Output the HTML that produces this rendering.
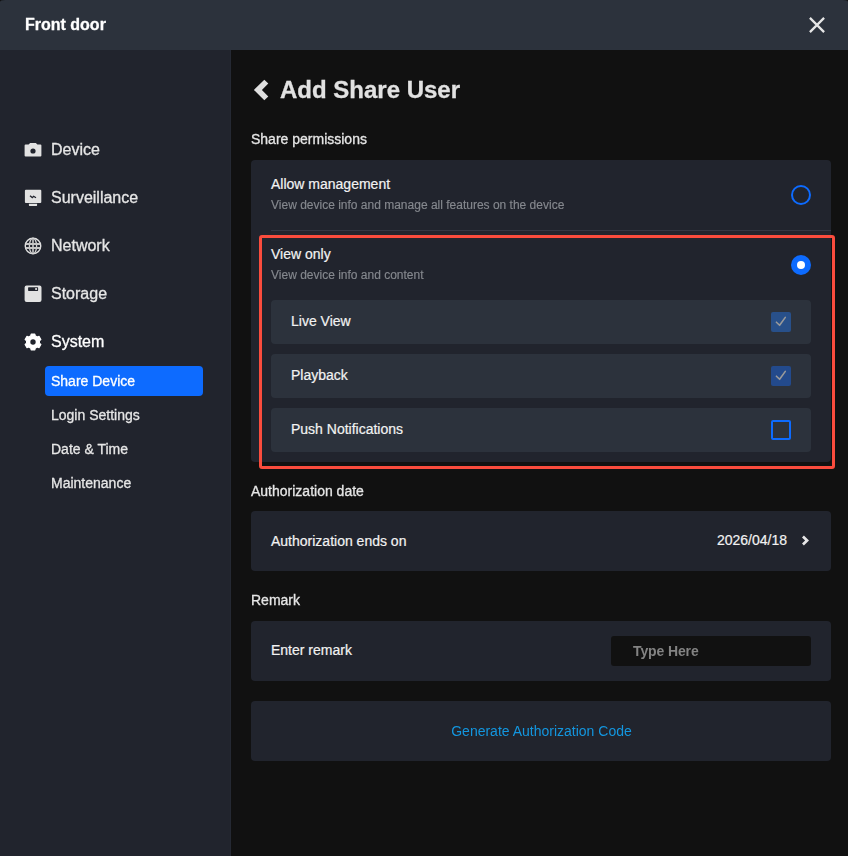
<!DOCTYPE html>
<html lang="en">
<head>
<meta charset="utf-8">
<title>Front door</title>
<style>
*{box-sizing:border-box;margin:0;padding:0}
html,body{width:848px;height:856px;overflow:hidden;background:#111111}
body{font-family:"Liberation Sans",Arial,sans-serif;color:#f0f0f0;position:relative;font-size:14px}
.abs{position:absolute}
.header{left:0;top:0;width:848px;height:50px;background:#2c323c;border-radius:5px 5px 0 0 / 2px 2px 0 0}
.header .ttl{left:24.500px;top:0;line-height:50px;font-size:16px;font-weight:bold;color:#fff}
.side{left:0;top:50px;width:231px;height:806px;background:#21242d;border-right:1px solid #252933}
.main{left:231px;top:50px;width:617px;height:806px;background:#111111}
.nav{left:51px;font-size:16px;line-height:20px;color:#e6e6e6;white-space:nowrap}
.ico{left:24px;width:18px;height:18px}
.sub{left:51px;font-size:14px;line-height:18px;color:#e6e6e6;white-space:nowrap}
.active{left:45px;top:366px;width:158px;height:30px;background:#0d6bff;border-radius:4px}
.h1{left:280.400px;top:75px;font-size:24px;line-height:30px;font-weight:bold;color:#e2e2e2;white-space:nowrap}
.lbl{left:251px;font-size:14px;line-height:18px;color:#e6e6e6;white-space:nowrap}
.card{left:251px;width:580px;background:#21242d;border-radius:4px}
.t{left:271px;font-size:14px;line-height:18px;color:#f2f2f2;white-space:nowrap}
.d{left:271px;font-size:12px;line-height:16px;color:#85888e;white-space:nowrap}
.row{left:271px;width:540px;height:44px;background:#2c323c;border-radius:4px}
.row span{position:absolute;left:20px;top:12px;font-size:14px;line-height:18px;color:#f2f2f2}
.red{left:259px;top:235px;width:576px;height:234px;border:3px solid #fa4c3d;border-radius:3px}
.radio{left:791px;width:20px;height:20px;border-radius:50%;border:2px solid #0d6bff}
.radio.on{background:#0d6bff;border:none}
.radio.on::after{content:"";position:absolute;left:6px;top:6px;width:8px;height:8px;border-radius:50%;background:#fff}
.cb{left:771px;width:20px;height:20px;border-radius:2px}
.cb.on{background:#1f4a8f}
.cb.off{border:2px solid #0d6bff}
.g,.nav,.sub,.ttl,.h1,.lbl,.d{will-change:transform}
.nav,.sub,.lbl,.ttl,.h1{-webkit-text-stroke:.3px currentColor}
.t,.row span{-webkit-text-stroke:.2px currentColor}
.d{-webkit-text-stroke:.15px currentColor}
</style>
</head>
<body>
<div class="abs header"><div class="abs ttl">Front door</div>
<svg class="abs" style="left:809px;top:17.400px" width="16" height="16" viewBox="0 0 16 16"><path d="M.9 .9L15.100 15.100M15.100 .9L.9 15.100" stroke="#e6e6e6" stroke-width="2.250" fill="none"/></svg>
</div>
<div class="abs side"></div>
<div class="abs main"></div>

<!-- icons -->
<svg class="abs" style="left:24px;top:142px" width="18" height="16" viewBox="0 0 18 16"><path fill-rule="evenodd" fill="#e2e2e2" d="M1.6 2.600H4.600L6.100 1.100H11.900L13.400 2.600H16.400A1 1 0 0 1 17.400 3.600V13.500A1 1 0 0 1 16.400 14.500H1.600A1 1 0 0 1 .6 13.500V3.600A1 1 0 0 1 1.600 2.600ZM9 6.400A2.600 2.600 0 1 0 9 11.600A2.600 2.600 0 1 0 9 6.400Z"/></svg>
<svg class="abs" style="left:24px;top:189px" width="18" height="18" viewBox="0 0 18 18"><path fill="#e2e2e2" d="M1.900.7H16.300A1 1 0 0 1 17.300 1.700V13A1 1 0 0 1 16.300 14H1.900A1 1 0 0 1 .9 13V1.700A1 1 0 0 1 1.900.7ZM4.900 14.700H13.100V16.300A.6.600 0 0 1 12.500 16.900H5.500A.6.600 0 0 1 4.900 16.300Z"/><path d="M6 6.800L8.300 8.600L9.600 7.300L12 8.700" stroke="#21242d" stroke-width="1.300" fill="none"/></svg>
<svg class="abs" style="left:24px;top:237px" width="18" height="18" viewBox="0 0 18 18"><g fill="none" stroke="#d2d2d2" stroke-width="1.300"><circle cx="9" cy="8.950" r="7.750" stroke="#e2e2e2" stroke-width="1.400"/><ellipse cx="9" cy="8.950" rx="3.600" ry="7.750"/><path d="M9 1.200V16.700" stroke-width="1.500"/><path d="M1.800 6.950H16.200M1.800 10.950H16.200" stroke="#c6c6c6" stroke-width="1.900"/></g></svg>
<svg class="abs" style="left:24px;top:285px" width="18" height="18" viewBox="0 0 18 18"><path fill-rule="evenodd" fill="#e2e2e2" d="M2.600.4H15.500A2 2 0 0 1 17.500 2.400V15.100A2 2 0 0 1 15.500 17.100H2.600A2 2 0 0 1 .6 15.100V2.400A2 2 0 0 1 2.600.4ZM4.700 2.200A.6.600 0 0 0 4.100 2.800V5.300A.6.600 0 0 0 4.700 5.900H13.500A.6.600 0 0 0 14.100 5.300V2.800A.6.600 0 0 0 13.500 2.200ZM12.100 2.900A1.100 1.100 0 1 0 12.100 5.100A1.100 1.100 0 1 0 12.100 2.900Z"/></svg>
<svg class="abs" style="left:24px;top:332.600px" width="18" height="18" viewBox="0 0 18 18"><path fill-rule="evenodd" fill="#ffffff" stroke="#ffffff" stroke-width="1.200" stroke-linejoin="round" d="M6.78 2.89L7.16 1.01L10.84 1.01L11.22 2.89L13.18 4.02L15.00 3.41L16.84 6.60L15.40 7.87L15.40 10.13L16.84 11.40L15.00 14.59L13.18 13.98L11.22 15.11L10.84 16.99L7.16 16.99L6.78 15.11L4.82 13.98L3.00 14.59L1.16 11.40L2.60 10.13L2.60 7.87L1.16 6.60L3.00 3.41L4.82 4.02Z"/><circle cx="9" cy="9" r="2.700" fill="#21242d"/></svg>
<!-- sidebar -->
<div class="abs nav" style="top:140px">Device</div>
<div class="abs nav" style="top:188px">Surveillance</div>
<div class="abs nav" style="top:236px">Network</div>
<div class="abs nav" style="top:284px">Storage</div>
<div class="abs nav" style="top:332px;color:#fff">System</div>
<div class="abs active"></div>
<div class="abs sub" style="top:372px;color:#fff">Share Device</div>
<div class="abs sub" style="top:406px">Login Settings</div>
<div class="abs sub" style="top:440px">Date &amp; Time</div>
<div class="abs sub" style="top:474px">Maintenance</div>

<!-- main -->
<svg class="abs" style="left:250px;top:76px" width="22" height="28" viewBox="0 0 22 28"><polygon fill="#e0e0e0" points="3.9,13.9 14.3,3.8 18.3,7.6 11.9,14 18.3,20.5 14.3,24.3"/></svg>
<div class="abs h1">Add Share User</div>
<div class="abs lbl" style="top:130px">Share permissions</div>
<div class="abs card" style="top:160px;height:302px"></div>
<div class="abs t" style="top:175px">Allow management</div>
<div class="abs d" style="top:197px">View device info and manage all features on the device</div>
<div class="abs radio" style="top:185px"></div>
<div class="abs" style="left:271px;top:230px;width:560px;height:1px;background:#343844"></div>
<div class="abs t" style="top:245px">View only</div>
<div class="abs d" style="top:267px">View device info and content</div>
<div class="abs radio on" style="top:255px"></div>
<div class="abs row" style="top:300px"><span>Live View</span></div>
<div class="abs row" style="top:354px"><span>Playback</span></div>
<div class="abs row" style="top:408px"><span>Push Notifications</span></div>
<div class="abs cb on" style="top:312px;background:#28508a"><svg width="20" height="20" viewBox="0 0 20 20" style="display:block"><path d="M5.400 10.200L8.600 13.300L14.300 5.400" stroke="#9a9a9a" stroke-width="1.600" fill="none" stroke-linecap="round" stroke-linejoin="round"/></svg></div>
<div class="abs cb on" style="top:366px;background:#234a8c"><svg width="20" height="20" viewBox="0 0 20 20" style="display:block"><path d="M5.400 10.200L8.600 13.300L14.300 5.400" stroke="#9a9a9a" stroke-width="1.600" fill="none" stroke-linecap="round" stroke-linejoin="round"/></svg></div>
<div class="abs cb off" style="top:420px"></div>
<div class="abs red"></div>

<div class="abs lbl" style="top:482px">Authorization date</div>
<div class="abs card" style="top:511px;height:60px"></div>
<div class="abs t" style="top:532px">Authorization ends on</div>
<div class="abs t" style="left:auto;right:61px;top:531px">2026/04/18</div>

<svg class="abs" style="left:799.300px;top:533px" width="12" height="15" viewBox="0 0 12 15"><polygon fill="#e6e6e6" points="10,7.500 4.900,2.600 3,4.400 6.100,7.500 3,10.600 4.900,12.400"/></svg>
<div class="abs lbl" style="top:591px">Remark</div>
<div class="abs card" style="top:621px;height:60px"></div>
<div class="abs t" style="top:641px">Enter remark</div>
<div class="abs" style="left:611px;top:636px;width:200px;height:30px;background:#111111;border-radius:3px"></div>
<div class="abs g" style="left:633px;top:642px;font-size:14px;line-height:18px;font-weight:bold;letter-spacing:-0.12px;color:#838383">Type Here</div>

<div class="abs card" style="top:701px;height:60px"></div>
<div class="abs g" style="left:251px;width:580px;top:722px;text-align:center;padding-left:1px;font-size:14px;line-height:18px;color:#1396df">Generate Authorization Code</div>
</body>
</html>
